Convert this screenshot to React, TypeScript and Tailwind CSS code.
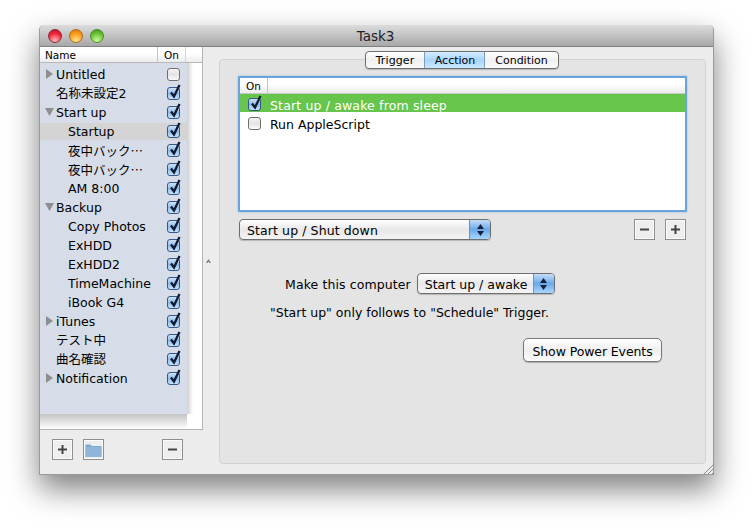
import React from "react";

const font = { fontFamily: '"DejaVu Sans","Noto Sans CJK JP",sans-serif' };
const cjk = { fontFamily: '"Noto Sans CJK JP",sans-serif' };

function Check({ on }: { on: boolean }) {
  return (
    <span className="relative inline-block w-[13px] h-[13px] rounded-[3px] border border-[#6f6f6f] shrink-0 overflow-visible bg-[linear-gradient(#f4f4f4,#e4e4e4_50%,#fbfbfb)] data-[on=true]:border-[#34588c] data-[on=true]:bg-[linear-gradient(#cfe2f6,#8fbbe8_50%,#c6e4fb)]" data-on={on}>
      {on && (
        <svg className="absolute left-[1px] top-[-4px]" width="13" height="15" viewBox="0 0 13 15">
          <path d="M2 8.500 L5 12.500 L10.500 1" fill="none" stroke="#101c34" strokeWidth="2.300" />
        </svg>
      )}
    </span>
  );
}

type Row = { t: string; on: boolean; level: number; tri?: "r" | "d"; sel?: boolean; jp?: boolean };
const rows: Row[] = [
  { t: "Untitled", on: false, level: 0, tri: "r" },
  { t: "名称未設定2", on: true, level: 0 },
  { t: "Start up", on: true, level: 0, tri: "d" },
  { t: "Startup", on: true, level: 1, sel: true },
  { t: "夜中バック…", on: true, level: 1, jp: true },
  { t: "夜中バック…", on: true, level: 1, jp: true },
  { t: "AM 8:00", on: true, level: 1 },
  { t: "Backup", on: true, level: 0, tri: "d" },
  { t: "Copy Photos", on: true, level: 1 },
  { t: "ExHDD", on: true, level: 1 },
  { t: "ExHDD2", on: true, level: 1 },
  { t: "TimeMachine", on: true, level: 1 },
  { t: "iBook G4", on: true, level: 1 },
  { t: "iTunes", on: true, level: 0, tri: "r" },
  { t: "テスト中", on: true, level: 0 },
  { t: "曲名確認", on: true, level: 0 },
  { t: "Notification", on: true, level: 0, tri: "r" },
];

function Tri({ d }: { d: "r" | "d" }) {
  return (
    <svg className="absolute left-[5px] top-[4px]" width="10" height="10" viewBox="0 0 10 10">
      {d === "r" ? <path d="M1 0 L8 5 L1 10 Z" fill="#8e8e8e" /> : <path d="M0 1 L9 1 L4.500 9 Z" fill="#8e8e8e" />}
    </svg>
  );
}

function SquareBtn({ children }: { children: React.ReactNode }) {
  return (
    <div className="w-[21px] h-[21px] border border-[#8f8f8f] bg-[#eeeeee] flex items-center justify-center shadow-[inset_0_0_0_1px_#fafafa]">
      {children}
    </div>
  );
}

const Plus = () => (
  <svg width="11" height="11" viewBox="0 0 11 11"><path d="M5.500 1v9M1 5.500h9" stroke="#444" strokeWidth="2" /></svg>
);
const Minus = () => (
  <svg width="11" height="11" viewBox="0 0 11 11"><path d="M1 5.500h9" stroke="#444" strokeWidth="2" /></svg>
);

function Stepper() {
  return (
    <div className="w-[21px] self-stretch rounded-r-[3px] border-l border-[#6f8fc0] bg-[linear-gradient(#c5def8,#6aa9ea_50%,#a6d8fc)] flex flex-col items-center justify-center gap-[2px]">
      <svg width="7" height="5" viewBox="0 0 7 5"><path d="M3.500 0 L7 5 H0 Z" fill="#17223a" /></svg>
      <svg width="7" height="5" viewBox="0 0 7 5"><path d="M3.500 5 L7 0 H0 Z" fill="#17223a" /></svg>
    </div>
  );
}

export default function App() {
  return (
    <div className="w-[753px] h-[529px] bg-white overflow-hidden pt-[25px] pl-[39px] text-black" style={font}>
      <div className="w-[675px] h-[450px] rounded-t-[5px] border border-[#9a9a9a] border-t-0 bg-[#ececec] shadow-[0_14px_30px_rgba(0,0,0,0.5)] flex flex-col">
        {/* Title bar */}
        <div className="h-[22px] rounded-t-[5px] bg-[linear-gradient(#dcdcdc,#a8a8a8)] border-b border-[#7f7f7f] flex items-center relative shrink-0">
          <div className="flex gap-[7px] pl-[8px]">
            <span className="w-[14px] h-[14px] rounded-full border border-[#8f2c34] bg-[radial-gradient(circle_at_50%_90%,#ffc0c0,#f02438_60%,#b80f26)]" />
            <span className="w-[14px] h-[14px] rounded-full border border-[#a86d22] bg-[radial-gradient(circle_at_50%_90%,#ffe890,#fb9a1a_60%,#d86f08)]" />
            <span className="w-[14px] h-[14px] rounded-full border border-[#4f8a2c] bg-[radial-gradient(circle_at_50%_90%,#d0fa9c,#68c432_60%,#36931a)]" />
          </div>
          <div className="absolute inset-0 flex items-center justify-center pr-[2px] pt-[2px] text-[13.500px] text-[#1c1c2c]">Task3</div>
        </div>

        <div className="flex flex-1 min-h-0">
          {/* Left column */}
          <div className="w-[163px] shrink-0 flex flex-col">
            <div className="h-[383px] bg-white border-r border-b border-[#b4b4b4] flex flex-col">
              <div className="h-[16px] shrink-0 flex text-[10.500px] leading-[16px] border-b border-[#b8b8b8] bg-[linear-gradient(#ffffff,#ffffff_40%,#ececec)]">
                <div className="w-[118px] pl-[5px] border-r border-[#c4c4c4]">Name</div>
                <div className="w-[28px] text-center border-r border-[#d4d4d4]">On</div>
              </div>
              <div className="flex h-[351px]">
                <div className="w-[147px] bg-[#d6dde9] pt-[2px]">
                  {rows.map((r, i) => (
                    <div key={i} className="relative h-[19px] flex items-center text-[12.500px] leading-none">
                      {r.sel && <div className="absolute inset-x-0 top-[1px] bottom-[1px] bg-[#d4d4d4]" />}
                      {r.tri && <Tri d={r.tri} />}
                      <span className={`relative whitespace-nowrap pt-[2px] ${r.level === 1 ? "ml-[28px]" : "ml-[16px]"}`} style={r.jp ? cjk : undefined}>{r.t}</span>
                      <span className="absolute left-[127px] top-[3px]"><Check on={r.on} /></span>
                    </div>
                  ))}
                </div>
                <div className="w-[6px] bg-[linear-gradient(90deg,#d0d0d0,#ffffff)]" />
              </div>
              <div className="w-[147px] flex-1 bg-[linear-gradient(#c4c4c4,#ffffff)]" />
            </div>
            <div className="flex-1 flex items-center pl-[12px] pb-[5px]">
              <SquareBtn><Plus /></SquareBtn>
              <div className="ml-[10px]">
                <SquareBtn>
                  <svg width="17" height="14" viewBox="0 0 17 14">
                    <path d="M0.500 1.500 h5 l1 1.500 h10 v11 h-16 Z" fill="#7fa9cf" />
                    <path d="M0.500 4 h16 v10 h-16 Z" fill="#8fb6d8" />
                  </svg>
                </SquareBtn>
              </div>
              <div className="ml-[58px]"><SquareBtn><Minus /></SquareBtn></div>
            </div>
          </div>

          {/* Divider */}
          <div className="w-[16px] shrink-0 flex items-center pl-[3px]">
            <svg width="5" height="4" viewBox="0 0 5 4"><path d="M2.500 0 L5 4 H3.500 L2.500 2.500 L1.500 4 H0 Z" fill="#7a7a7a" /></svg>
          </div>

          {/* Right column */}
          <div className="flex-1 flex flex-col pr-[8px] pb-[10px] relative">
            <div className="absolute top-[4px] left-[146px] h-[18px] flex rounded-[4px] border border-[#6e6e6e] bg-[linear-gradient(#ffffff,#f0f0f0_50%,#fafafa)] text-[11px] leading-[17px] shadow-[0_1px_1px_rgba(0,0,0,0.2)] z-10">
              <div className="w-[58px] text-center tracking-[0.1px]">Trigger</div>
              <div className="w-[61px] text-center border-x border-[#7b9fc4] bg-[linear-gradient(#d6ebff,#a8d4fb_50%,#cbe8ff)] pl-[1px]">Acction</div>
              <div className="w-[73px] text-center">Condition</div>
            </div>
            <div className="mt-[12px] flex-1 rounded-[4px] border border-[#d2d2d2] bg-[#e4e4e4] flex flex-col px-[18px] pt-[16px] relative">
              {/* Table */}
              <div className="w-[449px] h-[136px] bg-white border-2 border-[#66a5dd] shrink-0 rounded-[1px] shadow-[0_0_2px_rgba(80,140,210,0.6)]">
                <div className="h-[16px] flex text-[10.500px] leading-[16px] border-b border-[#c8c8c8] bg-[linear-gradient(#ffffff,#ffffff_40%,#ececec)]">
                  <div className="w-[28px] text-center border-r border-[#c4c4c4]">On</div>
                </div>
                <div className="h-[18px] mb-[1px] bg-[#66c54a] flex items-center pl-[8px] text-[12.500px] text-white">
                  <span className="flex pt-[2px]"><Check on={true} /></span>
                  <span className="ml-[9px] pt-[6px] tracking-[0.15px]">Start up / awake from sleep</span>
                </div>
                <div className="h-[19px] flex items-center pl-[8px] text-[12.500px]">
                  <span className="flex pt-[2px]"><Check on={false} /></span>
                  <span className="ml-[9px] pt-[5px]">Run AppleScript</span>
                </div>
              </div>

              {/* Popup + +/- */}
              <div className="flex items-center mt-[7px] w-[448px] pl-[1px]">
                <div className="w-[252px] h-[21px] flex rounded-[4px] border border-[#6e6e6e] bg-[linear-gradient(#ffffff,#e8e8e8_50%,#f4f4f4)] text-[12.500px] leading-[22px] shadow-[0_1px_1px_rgba(0,0,0,0.2)]">
                  <span className="flex-1 pl-[7px] tracking-[0.1px]">Start up / Shut down</span>
                  <Stepper />
                </div>
                <div className="ml-auto"><SquareBtn><Minus /></SquareBtn></div>
                <div className="ml-[10px]"><SquareBtn><Plus /></SquareBtn></div>
              </div>

              <div className="flex items-center mt-[33px] ml-[47px] text-[12.500px]">
                <span className="tracking-[0.1px] pt-[3px]">Make this computer</span>
                <div className="ml-[6px] w-[138px] h-[21px] flex rounded-[4px] border border-[#6e6e6e] bg-[linear-gradient(#ffffff,#e8e8e8_50%,#f4f4f4)] leading-[22px] shadow-[0_1px_1px_rgba(0,0,0,0.2)]">
                  <span className="flex-1 pl-[7px]">Start up / awake</span>
                  <Stepper />
                </div>
              </div>
              <div className="mt-[10px] ml-[32px] text-[12.500px] leading-[16px]">"Start up" only follows to "Schedule" Trigger.</div>

              <div className="mt-[17px] ml-[285px] w-[139px] h-[24px] rounded-[5px] border border-[#777] bg-[linear-gradient(#ffffff,#efefef_50%,#fbfbfb)] text-[12.500px] leading-[25px] tracking-[-0.1px] text-center shadow-[0_1px_1px_rgba(0,0,0,0.25)]">Show Power Events</div>
            </div>
            <svg className="absolute right-0 bottom-0" width="11" height="11" viewBox="0 0 11 11">
              <path d="M1 11 L11 1 M5 11 L11 5 M9 11 L11 9" stroke="#8a8a8a" strokeWidth="1" />
            </svg>
          </div>
        </div>
      </div>
    </div>
  );
}
